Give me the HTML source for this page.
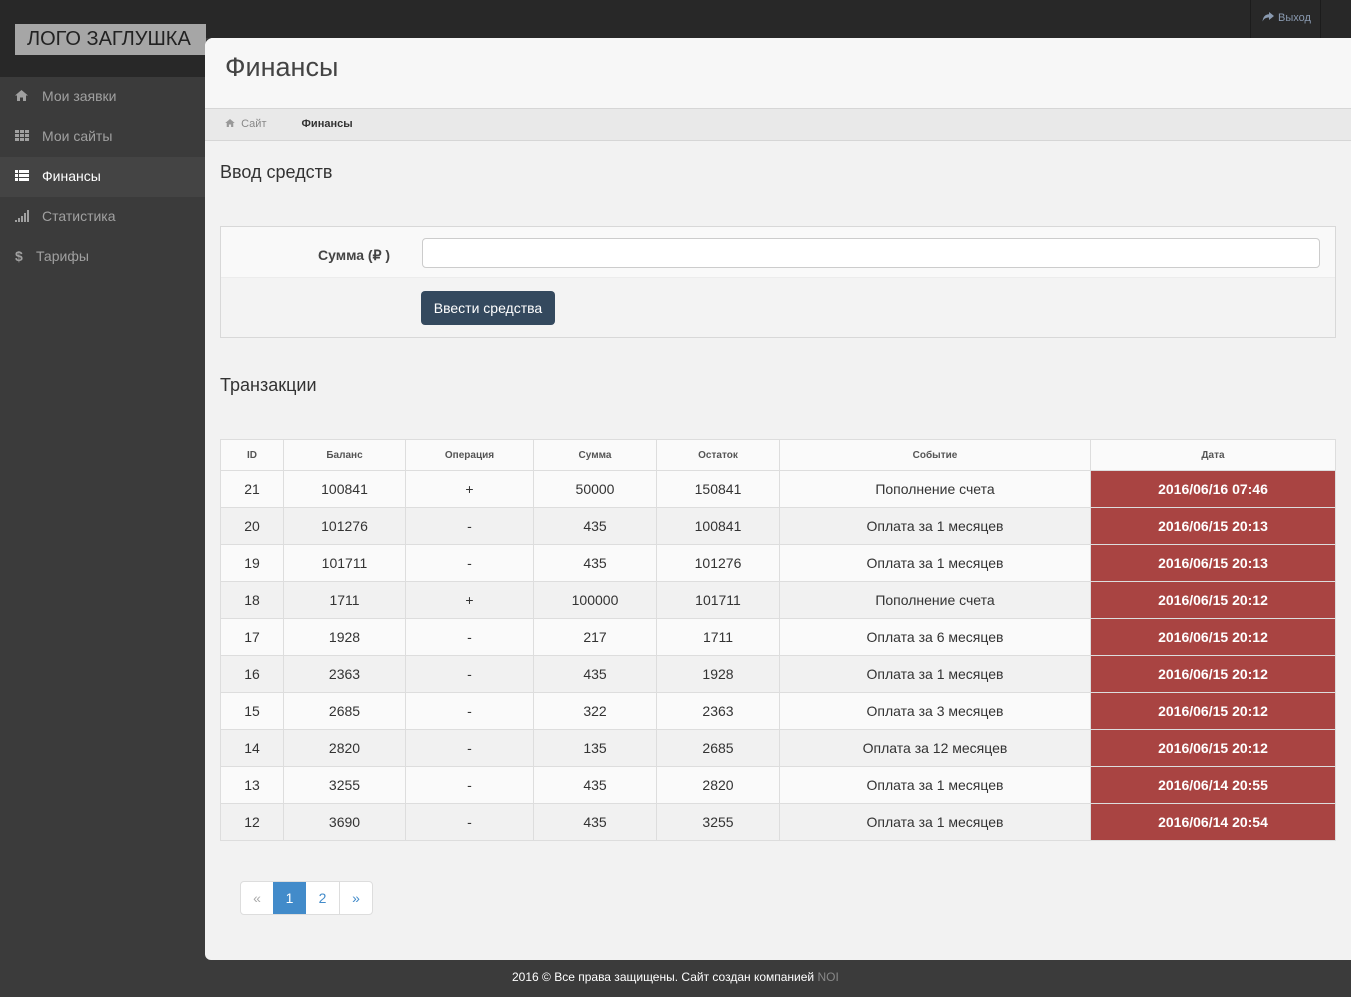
<!DOCTYPE html>
<html><head><meta charset="utf-8"><style>
*{box-sizing:border-box;margin:0;padding:0}
body{width:1351px;height:997px;background:#3b3b3b;font-family:"Liberation Sans",sans-serif;position:relative;overflow:hidden;color:#333}
.top{position:absolute;left:0;top:0;width:1351px;height:38px;background:#282828}
.side-top{position:absolute;left:0;top:0;width:205px;height:77px;background:#282828}
.logo{position:absolute;left:15px;top:24px;width:191px;height:31px;background:#a6a6a6;color:#222;font-size:20px;line-height:31px;padding-left:12px}
.exit{position:absolute;left:1250px;top:0;width:71px;height:38px;border-left:1px solid #1c1c1c;border-right:1px solid #1c1c1c;color:#8a9ab0;font-size:11px;line-height:36px;padding-left:11px}
.exit svg{vertical-align:-1px;margin-right:4px}
.nav{position:absolute;left:0;top:77px;width:205px}
.nav div{height:40px;line-height:38px;color:#a0a0a0;font-size:14px;padding-left:15px;position:relative}
.nav div.act{background:#444;color:#fff}
.nav svg{position:absolute;left:15px;top:13px}
.nav span{position:absolute;left:42px}
.main{position:absolute;left:205px;top:38px;width:1146px;height:922px;background:#f2f2f2;border-top-left-radius:8px;border-bottom-left-radius:6px;overflow:hidden}
.hdr{height:70px;background:#f7f7f7;font-size:27px;color:#444;padding:14px 0 0 20px}
.bc{height:33px;background:#e9e9e9;border-top:1px solid #d6d6d6;border-bottom:1px solid #d6d6d6;font-size:11px;line-height:31px;padding-left:20px;color:#888}
.bc b{color:#333;margin-left:32px}
h3{position:absolute;font-weight:normal;font-size:18px;color:#333}
.form{position:absolute;left:15px;top:188px;width:1116px;height:112px;border:1px solid #d8d8d8;background:#f3f3f3}
.form .r1{height:51px;background:#f9f9f9;border-bottom:1px solid #ececec}
.lbl{position:absolute;left:97px;top:20px;font-weight:bold;font-size:14px;color:#444}
.inp{position:absolute;left:201px;top:11px;width:898px;height:30px;border:1px solid #ccc;border-radius:4px;background:#fff}
.btn{position:absolute;left:200px;top:64px;width:134px;height:34px;background:#34495e;border-radius:4px;color:#fff;font-size:14px;line-height:34px;text-align:center}
table{position:absolute;left:15px;top:401px;border-collapse:collapse;width:1116px;font-size:14px}
td,th{border:1px solid #ddd;text-align:center;height:37px;color:#333}
th{height:31px;font-size:10px;color:#555;background:#fafafa}
tr:nth-child(even) td{background:#fafafa}
tr:nth-child(odd) td{background:#f1f1f1}
td.d{background:#a94442!important;color:#fff;font-weight:bold}
.pg{position:absolute;left:35px;top:843px;display:flex;border:1px solid #ddd;border-radius:4px;overflow:hidden;background:#fff}
.pg div{width:33px;height:32px;line-height:32px;text-align:center;color:#428bca;font-size:14px;border-left:1px solid #ddd}
.pg div:first-child{border-left:none;color:#aaa;width:32px}
.pg .a{background:#428bca;color:#fff;border-left:none!important}
.foot{position:absolute;left:512px;top:970px;font-size:12px;color:#fff}
</style></head><body>
<div class="top"></div><div class="side-top"></div>
<div class="logo">ЛОГО ЗАГЛУШКА</div>
<div class="exit"><svg width="12" height="10" viewBox="0 0 12 10"><path d="M7 0L12 4L7 8V5.5C4 5.5 2 6.5 0.5 9.5C1 5 3 2.5 7 2.3Z" fill="#8a9ab0"/></svg>Выход</div>
<div class="nav">
<div><svg width="13" height="11" viewBox="0 0 13 11"><path d="M6.5 0L13 5.5H11V11H8V7.5H5V11H2V5.5H0Z" fill="#a0a0a0"/></svg><span>Мои заявки</span></div>
<div><svg width="14" height="11" viewBox="0 0 14 11" fill="#a0a0a0"><rect x="0" y="0" width="4" height="3"/><rect x="5" y="0" width="4" height="3"/><rect x="10" y="0" width="4" height="3"/><rect x="0" y="4" width="4" height="3"/><rect x="5" y="4" width="4" height="3"/><rect x="10" y="4" width="4" height="3"/><rect x="0" y="8" width="4" height="3"/><rect x="5" y="8" width="4" height="3"/><rect x="10" y="8" width="4" height="3"/></svg><span>Мои сайты</span></div>
<div class="act"><svg width="14" height="11" viewBox="0 0 14 11" fill="#fff"><rect x="0" y="0" width="3" height="3"/><rect x="4" y="0" width="10" height="3"/><rect x="0" y="4" width="3" height="3"/><rect x="4" y="4" width="10" height="3"/><rect x="0" y="8" width="3" height="3"/><rect x="4" y="8" width="10" height="3"/></svg><span>Финансы</span></div>
<div><svg width="14" height="12" viewBox="0 0 14 12" fill="#a0a0a0"><rect x="0" y="10" width="2" height="2"/><rect x="3" y="8" width="2" height="4"/><rect x="6" y="6" width="2" height="6"/><rect x="9" y="3" width="2" height="9"/><rect x="12" y="0" width="2" height="12"/></svg><span>Статистика</span></div>
<div><span style="left:15px;font-weight:bold">$</span><span style="left:36px">Тарифы</span></div>
</div>
<div class="main">
<div class="hdr">Финансы</div>
<div class="bc"><svg width="10" height="8" viewBox="0 0 13 11"><path d="M6.5 0L13 5.5H11V11H8V7.5H5V11H2V5.5H0Z" fill="#999"/></svg> &nbsp;Сайт <b>Финансы</b></div>
<h3 style="left:15px;top:124px">Ввод средств</h3>
<div class="form"><div class="r1"></div><div class="lbl">Сумма (₽ )</div><div class="inp"></div><div class="btn">Ввести средства</div></div>
<h3 style="left:15px;top:337px">Транзакции</h3>
<table>
<tr><th style="width:63px">ID</th><th style="width:122px">Баланс</th><th style="width:128px">Операция</th><th style="width:123px">Сумма</th><th style="width:123px">Остаток</th><th style="width:311px">Событие</th><th>Дата</th></tr>
<tr><td>21</td><td>100841</td><td>+</td><td>50000</td><td>150841</td><td>Пополнение счета</td><td class="d">2016/06/16 07:46</td></tr>
<tr><td>20</td><td>101276</td><td>-</td><td>435</td><td>100841</td><td>Оплата за 1 месяцев</td><td class="d">2016/06/15 20:13</td></tr>
<tr><td>19</td><td>101711</td><td>-</td><td>435</td><td>101276</td><td>Оплата за 1 месяцев</td><td class="d">2016/06/15 20:13</td></tr>
<tr><td>18</td><td>1711</td><td>+</td><td>100000</td><td>101711</td><td>Пополнение счета</td><td class="d">2016/06/15 20:12</td></tr>
<tr><td>17</td><td>1928</td><td>-</td><td>217</td><td>1711</td><td>Оплата за 6 месяцев</td><td class="d">2016/06/15 20:12</td></tr>
<tr><td>16</td><td>2363</td><td>-</td><td>435</td><td>1928</td><td>Оплата за 1 месяцев</td><td class="d">2016/06/15 20:12</td></tr>
<tr><td>15</td><td>2685</td><td>-</td><td>322</td><td>2363</td><td>Оплата за 3 месяцев</td><td class="d">2016/06/15 20:12</td></tr>
<tr><td>14</td><td>2820</td><td>-</td><td>135</td><td>2685</td><td>Оплата за 12 месяцев</td><td class="d">2016/06/15 20:12</td></tr>
<tr><td>13</td><td>3255</td><td>-</td><td>435</td><td>2820</td><td>Оплата за 1 месяцев</td><td class="d">2016/06/14 20:55</td></tr>
<tr><td>12</td><td>3690</td><td>-</td><td>435</td><td>3255</td><td>Оплата за 1 месяцев</td><td class="d">2016/06/14 20:54</td></tr>
</table>
<div class="pg"><div>«</div><div class="a">1</div><div style="border-left:none">2</div><div>»</div></div>
</div>
<div class="foot">2016 © Все права защищены. Сайт создан компанией <span style="color:#888">NOI</span></div>
</body></html>
